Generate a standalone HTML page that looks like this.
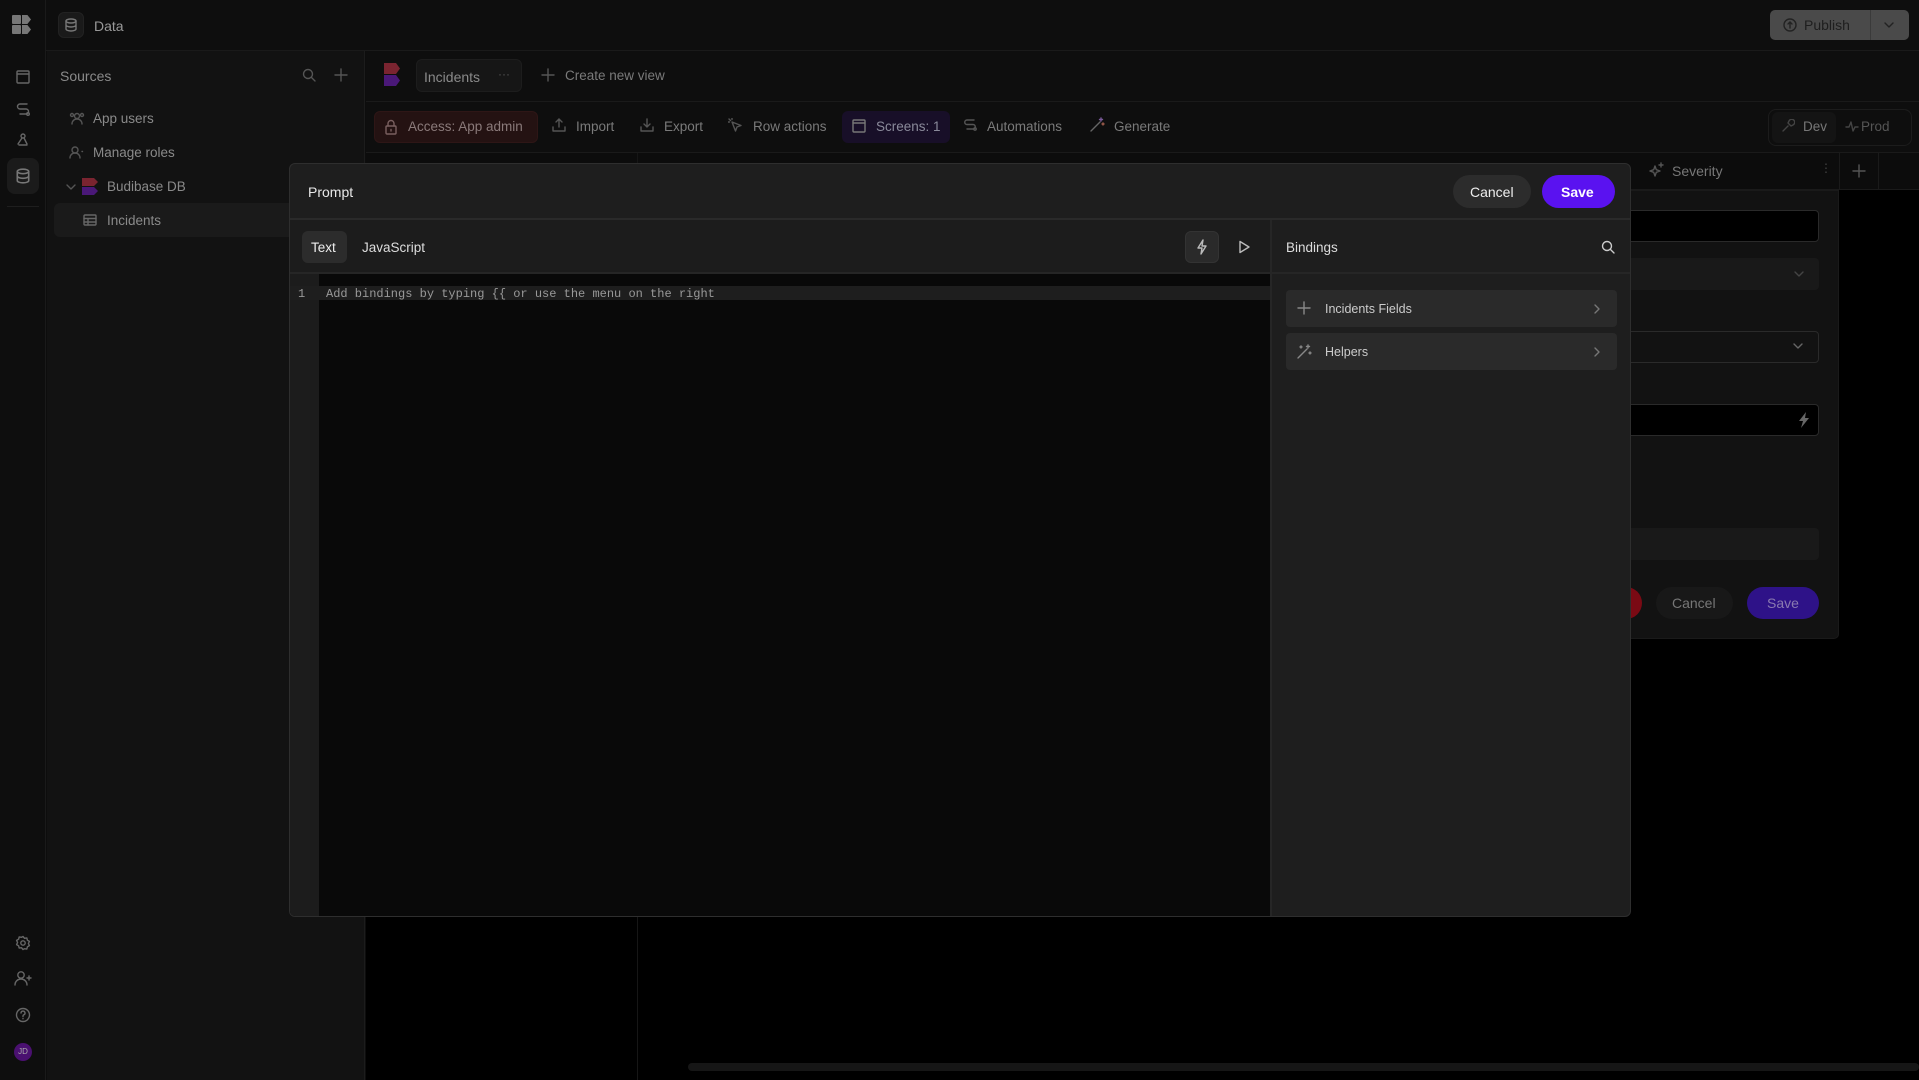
<!DOCTYPE html>
<html><head><meta charset="utf-8"><style>
*{box-sizing:border-box;margin:0;padding:0}
body{width:1919px;height:1080px;background:#0d0d0d;font-family:"Liberation Sans",sans-serif;color:#8a8a8a;position:relative;overflow:hidden;font-size:14px}
.a{position:absolute}
.t{position:absolute;white-space:nowrap;line-height:1}
svg{position:absolute;fill:none;stroke:currentColor;stroke-width:1.4;stroke-linecap:round;stroke-linejoin:round}
</style></head><body>
<!-- rail -->
<div class="a" style="left:0;top:0;width:46px;height:1080px;background:#0e0e0e;border-right:1px solid #1a1a1a"></div>
<div class="a" style="left:46px;top:0;width:1873px;height:51px;background:#0e0e0e;border-bottom:1px solid #1a1a1a"></div>
<div class="a" style="left:12px;top:15px;width:9px;height:9px;background:#777;border-radius:1px"></div>
<div class="a" style="left:22px;top:15px;width:9px;height:9px;background:#777;clip-path:polygon(0 0,60% 0,100% 50%,60% 100%,0 100%)"></div>
<div class="a" style="left:12px;top:25px;width:9px;height:9px;background:#777;border-radius:1px"></div>
<div class="a" style="left:22px;top:25px;width:9px;height:9px;background:#777;clip-path:polygon(0 0,60% 0,100% 50%,60% 100%,0 100%)"></div>
<div class="a" style="left:58px;top:12px;width:26px;height:26px;background:#1a1a1a;border:1px solid #222;border-radius:6px"></div>
<svg style="left:64px;top:18px;color:#777" width="14" height="14" viewBox="0 0 14 14"><ellipse cx="7" cy="3" rx="5" ry="2"/><path d="M2 3v8c0 1.1 2.2 2 5 2s5-.9 5-2V3M2 7c0 1.1 2.2 2 5 2s5-.9 5-2"/></svg>
<div class="t" style="left:94px;top:19px;font-size:14px;color:#999">Data</div>
<svg style="left:15px;top:69px;color:#666" width="16" height="16" viewBox="0 0 16 16"><rect x="2" y="2" width="12" height="12" rx="1"/><path d="M2 5h12"/></svg>
<svg style="left:15px;top:101px;color:#666" width="16" height="16" viewBox="0 0 16 16"><path d="M12 3H5a2 2 0 0 0 0 5h6a2 2 0 0 1 0 5H5"/><circle cx="13" cy="13" r="1.3"/></svg>
<svg style="left:15px;top:133px;color:#666" width="16" height="16" viewBox="0 0 16 16"><circle cx="8" cy="3" r="2"/><path d="M7 5l-4 6M9 5l3 6M4 12h8"/></svg>
<div class="a" style="left:7px;top:158px;width:32px;height:36px;background:#1b1b1b;border-radius:8px"></div>
<svg style="left:15px;top:168px;color:#777" width="16" height="16" viewBox="0 0 14 14"><ellipse cx="7" cy="3" rx="5" ry="2"/><path d="M2 3v8c0 1.1 2.2 2 5 2s5-.9 5-2V3M2 7c0 1.1 2.2 2 5 2s5-.9 5-2"/></svg>
<div class="a" style="left:7px;top:206px;width:32px;height:1px;background:#1e1e1e"></div>
<svg style="left:15px;top:935px;color:#666" width="16" height="16" viewBox="0 0 16 16"><circle cx="8" cy="8" r="2.2"/><path d="M8 1.5l1.5 1.8 2.3-.4.6 2.3 2 1.2-1 2.1 1 2.1-2 1.2-.6 2.3-2.3-.4L8 14.5l-1.5-1.8-2.3.4-.6-2.3-2-1.2 1-2.1-1-2.1 2-1.2.6-2.3 2.3.4z"/></svg>
<svg style="left:14px;top:970px;color:#666" width="18" height="16" viewBox="0 0 18 16"><circle cx="7" cy="5" r="3.2"/><path d="M1 15c0-3.5 2.7-6 6-6s6 2.5 6 6M15 6v4M13 8h4"/></svg>
<svg style="left:15px;top:1007px;color:#666" width="16" height="16" viewBox="0 0 16 16"><circle cx="8" cy="8" r="6.5"/><path d="M6 6a2 2 0 1 1 2.7 1.9c-.5.2-.7.6-.7 1.1v.5M8 11.5v.2"/></svg>
<div class="a" style="left:14px;top:1043px;width:18px;height:18px;border-radius:50%;background:#4a1070;color:#aaa;font-size:8px;text-align:center;line-height:18px">JD</div>
<!-- sidebar -->
<div class="a" style="left:47px;top:51px;width:318px;height:1029px;background:#121212;border-right:1px solid #1c1c1c"></div>
<div class="t" style="left:60px;top:69px;font-size:14px;color:#8a8a8a">Sources</div>
<svg style="left:302px;top:68px;color:#555" width="14" height="14" viewBox="0 0 14 14"><circle cx="6" cy="6" r="4.5"/><path d="M9.5 9.5L13 13"/></svg>
<svg style="left:333px;top:67px;color:#555" width="16" height="16" viewBox="0 0 16 16"><path d="M8 2v12M2 8h12"/></svg>
<svg style="left:69px;top:111px;color:#555" width="16" height="14" viewBox="0 0 16 14"><circle cx="8" cy="5" r="2.5"/><path d="M3 13c0-3 2.2-5 5-5s5 2 5 5"/><circle cx="3" cy="4" r="1.5"/><circle cx="13" cy="4" r="1.5"/></svg>
<div class="t" style="left:93px;top:112px;font-size:13.5px;color:#8a8a8a">App users</div>
<svg style="left:69px;top:145px;color:#555" width="16" height="14" viewBox="0 0 16 14"><circle cx="6" cy="5" r="3"/><path d="M1 13c0-3 2.2-5 5-5s5 2 5 5M13 6.5h.5"/></svg>
<div class="t" style="left:93px;top:146px;font-size:13.5px;color:#8a8a8a">Manage roles</div>
<svg style="left:66px;top:182px;color:#555" width="10" height="10" viewBox="0 0 10 10"><path d="M1 3l4 4 4-4"/></svg>
<div class="a" style="left:82px;top:178px;width:8px;height:8px;background:#7a2430"></div>
<div class="a" style="left:90px;top:178px;width:8px;height:8px;background:#7a2430;clip-path:polygon(0 0,50% 0,100% 50%,50% 100%,0 100%)"></div>
<div class="a" style="left:82px;top:187px;width:8px;height:8px;background:#4a1878"></div>
<div class="a" style="left:90px;top:187px;width:8px;height:8px;background:#4a1878;clip-path:polygon(0 0,50% 0,100% 50%,50% 100%,0 100%)"></div>
<div class="t" style="left:107px;top:180px;font-size:13.5px;color:#8a8a8a">Budibase DB</div>
<div class="a" style="left:54px;top:203px;width:300px;height:34px;background:#1a1a1a;border-radius:6px"></div>
<svg style="left:83px;top:213px;color:#666" width="14" height="14" viewBox="0 0 14 14"><rect x="1" y="2" width="12" height="10" rx="1"/><path d="M1 5.5h12M1 9h12M5 5.5V12"/></svg>
<div class="t" style="left:107px;top:214px;font-size:13.5px;color:#8a8a8a">Incidents</div>
<!-- main header -->
<div class="a" style="left:366px;top:51px;width:1553px;height:51px;border-bottom:1px solid #1a1a1a;background:#0e0e0e"></div>
<div class="a" style="left:384px;top:63px;width:8px;height:11px;background:#7a2430"></div>
<div class="a" style="left:392px;top:63px;width:8px;height:11px;background:#7a2430;clip-path:polygon(0 0,50% 0,100% 50%,50% 100%,0 100%)"></div>
<div class="a" style="left:384px;top:75px;width:8px;height:11px;background:#4a1878"></div>
<div class="a" style="left:392px;top:75px;width:8px;height:11px;background:#4a1878;clip-path:polygon(0 0,50% 0,100% 50%,50% 100%,0 100%)"></div>
<div class="a" style="left:416px;top:59px;width:106px;height:33px;background:#161616;border:1px solid #1d1d1d;border-radius:6px"></div>
<div class="t" style="left:424px;top:70px;font-size:14px;color:#8a8a8a">Incidents</div>
<div class="t" style="left:498px;top:68px;font-size:12px;color:#555">···</div>
<svg style="left:541px;top:68px;color:#555" width="14" height="14" viewBox="0 0 14 14"><path d="M7 1v12M1 7h12"/></svg>
<div class="t" style="left:565px;top:69px;font-size:13.5px;color:#7a7a7a">Create new view</div>
<!-- toolbar -->
<div class="a" style="left:366px;top:102px;width:1553px;height:51px;border-bottom:1px solid #1a1a1a;background:#0e0e0e"></div>
<div class="a" style="left:374px;top:111px;width:164px;height:32px;background:#241212;border:1px solid #2e1616;border-radius:6px"></div>
<svg style="left:384px;top:119px;color:#7a6060" width="14" height="16" viewBox="0 0 14 16"><rect x="2" y="7" width="10" height="8" rx="1"/><path d="M4 7V4.5a3 3 0 0 1 6 0V7M7 10.5v1.5"/></svg>
<div class="t" style="left:408px;top:120px;font-size:13.5px;color:#8a7a7a">Access: App admin</div>
<svg style="left:552px;top:118px;color:#555" width="14" height="14" viewBox="0 0 14 14"><path d="M7 9V1M4 4l3-3 3 3M1 9v4h12V9"/></svg>
<div class="t" style="left:576px;top:120px;font-size:13.5px;color:#7a7a7a">Import</div>
<svg style="left:640px;top:118px;color:#555" width="14" height="14" viewBox="0 0 14 14"><path d="M7 1v8M4 6l3 3 3-3M1 9v4h12V9"/></svg>
<div class="t" style="left:664px;top:120px;font-size:13.5px;color:#7a7a7a">Export</div>
<svg style="left:728px;top:118px;color:#555" width="14" height="14" viewBox="0 0 14 14"><path d="M4 4l9 3.5-4 1.5-1.5 4z"/><path d="M1 1l1.5 1.5M4 0v1.5M0 4h1.5"/></svg>
<div class="t" style="left:753px;top:120px;font-size:13.5px;color:#7a7a7a">Row actions</div>
<div class="a" style="left:842px;top:111px;width:108px;height:32px;background:#180f28;border-radius:6px"></div>
<svg style="left:852px;top:119px;color:#777" width="14" height="14" viewBox="0 0 14 14"><rect x="1" y="1" width="12" height="12" rx="1"/><path d="M1 4h12"/></svg>
<div class="t" style="left:876px;top:120px;font-size:13.5px;color:#8a8a9a">Screens: 1</div>
<svg style="left:963px;top:118px;color:#555" width="14" height="14" viewBox="0 0 14 14"><path d="M11 2H4a2 2 0 0 0 0 4.5h6a2 2 0 0 1 0 4.5H4"/><circle cx="12" cy="11" r="1.2"/></svg>
<div class="t" style="left:987px;top:120px;font-size:13.5px;color:#7a7a7a">Automations</div>
<svg style="left:1089px;top:117px;color:#666" width="16" height="16" viewBox="0 0 16 16"><path d="M2 14l9-9"/><path d="M12 1v3M10.5 2.5h3" stroke="#7a5a9a"/><path d="M14 6v2M13 7h2" stroke="#9a5a4a"/></svg>
<div class="t" style="left:1114px;top:120px;font-size:13.5px;color:#7a7a7a">Generate</div>
<div class="a" style="left:1768px;top:109px;width:144px;height:37px;border:1px solid #1c1c1c;border-radius:8px"></div>
<div class="a" style="left:1772px;top:112px;width:64px;height:31px;background:#141414;border-radius:6px"></div>
<div class="t" style="left:1803px;top:120px;font-size:13.5px;color:#777">Dev</div>
<svg style="left:1781px;top:119px;color:#444" width="14" height="14" viewBox="0 0 14 14"><path d="M2 12l5-5M8 2a3 3 0 1 1 4 4l-2 1-3-3z"/></svg>
<div class="t" style="left:1861px;top:120px;font-size:13.5px;color:#555">Prod</div>
<svg style="left:1845px;top:119px;color:#444" width="14" height="14" viewBox="0 0 14 14"><path d="M1 8h3l2-5 2 9 2-4h3"/></svg>
<!-- Publish -->
<div class="a" style="left:1770px;top:10px;width:139px;height:30px;background:#4a4a4a;border-radius:5px"></div>
<div class="a" style="left:1870px;top:10px;width:1px;height:30px;background:#3a3a3a"></div>
<svg style="left:1783px;top:18px;color:#222" width="14" height="14" viewBox="0 0 14 14"><circle cx="7" cy="7" r="6"/><path d="M7 10V4M5 6l2-2 2 2"/></svg>
<div class="t" style="left:1804px;top:18px;font-size:14px;color:#1e1e1e">Publish</div>
<svg style="left:1883px;top:19px;color:#222" width="12" height="12" viewBox="0 0 12 12"><path d="M2 4l4 4 4-4"/></svg>
<!-- grid area -->
<div class="a" style="left:366px;top:153px;width:1553px;height:927px;background:#000"></div>
<div class="a" style="left:366px;top:153px;width:1553px;height:37px;background:#0c0c0c;border-bottom:1px solid #1a1a1a"></div>
<div class="a" style="left:637px;top:153px;width:1px;height:927px;background:#161616"></div>
<div class="a" style="left:1839px;top:153px;width:1px;height:37px;background:#1a1a1a"></div>
<div class="a" style="left:1878px;top:153px;width:1px;height:37px;background:#1a1a1a"></div>
<svg style="left:1649px;top:162px;color:#555" width="16" height="16" viewBox="0 0 16 16"><path d="M6 4l1.3 3.7L11 9l-3.7 1.3L6 14l-1.3-3.7L1 9l3.7-1.3zM12 1v4M10 3h4"/></svg>
<div class="t" style="left:1672px;top:164px;font-size:14px;color:#777">Severity</div>
<div class="t" style="left:1820px;top:162px;font-size:12px;color:#444">⋮</div>
<svg style="left:1852px;top:164px;color:#555" width="14" height="14" viewBox="0 0 14 14"><path d="M7 1v12M1 7h12"/></svg>
<div class="a" style="left:1600px;top:190px;width:239px;height:449px;background:#121212;border:1px solid #1a1a1a;border-radius:0 0 5px 5px"></div>
<div class="a" style="left:1620px;top:210px;width:199px;height:32px;background:#000;border:1px solid #2a2a2a;border-radius:4px"></div>
<div class="a" style="left:1620px;top:258px;width:199px;height:32px;background:#191919;border-radius:4px"></div>
<svg style="left:1793px;top:269px;color:#444" width="12" height="10" viewBox="0 0 12 10"><path d="M2 3l4 4 4-4"/></svg>
<div class="a" style="left:1620px;top:331px;width:199px;height:32px;border:1px solid #2a2a2a;border-radius:4px"></div>
<svg style="left:1792px;top:341px;color:#666" width="12" height="10" viewBox="0 0 12 10"><path d="M2 3l4 4 4-4"/></svg>
<div class="a" style="left:1620px;top:404px;width:199px;height:32px;background:#000;border:1px solid #2a2a2a;border-radius:4px"></div>
<svg style="left:1797px;top:411px;fill:#666;stroke:none" width="14" height="18" viewBox="0 0 14 18"><path d="M9 1L2 10h4l-2 7 8-10H8z"/></svg>
<div class="a" style="left:1620px;top:528px;width:199px;height:32px;background:#191919;border-radius:4px"></div>
<div class="a" style="left:1610px;top:587px;width:32px;height:32px;background:#7a0a14;border-radius:16px"></div>
<div class="a" style="left:1656px;top:587px;width:77px;height:32px;background:#181818;border-radius:16px"></div>
<div class="t" style="left:1672px;top:596px;font-size:14px;color:#777">Cancel</div>
<div class="a" style="left:1747px;top:587px;width:72px;height:32px;background:#2e1288;border-radius:16px"></div>
<div class="t" style="left:1767px;top:596px;font-size:14px;color:#8a7ab0">Save</div>
<div class="a" style="left:688px;top:1063px;width:1231px;height:8px;background:#161616;border-radius:4px"></div>
<!-- modal -->
<div class="a" style="left:289px;top:163px;width:1342px;height:754px;background:#1e1e1e;border:1px solid #2e2e2e;border-radius:6px;overflow:hidden">
 <div class="a" style="left:0;top:54px;width:1342px;height:2px;background:#2a2a2a"></div>
 <div class="t" style="left:18px;top:21px;font-size:14px;color:#e8e8e8">Prompt</div>
 <div class="a" style="left:1163px;top:11px;width:78px;height:33px;background:#2c2c2c;border-radius:17px"></div>
 <div class="t" style="left:1180px;top:21px;font-size:14px;color:#eee">Cancel</div>
 <div class="a" style="left:1252px;top:11px;width:73px;height:33px;background:#5a12f0;border-radius:17px"></div>
 <div class="t" style="left:1271px;top:21px;font-size:14px;color:#fff;font-weight:bold">Save</div>
 <div class="a" style="left:0;top:56px;width:982px;height:52px;background:#1c1c1c"></div>
 <div class="a" style="left:0;top:108px;width:1342px;height:2px;background:#262626"></div>
 <div class="a" style="left:980px;top:56px;width:2px;height:700px;background:#262626"></div>
 <div class="a" style="left:12px;top:67px;width:45px;height:32px;background:#2c2c2c;border-radius:6px"></div>
 <div class="t" style="left:21px;top:77px;font-size:13.5px;color:#eee">Text</div>
 <div class="t" style="left:72px;top:77px;font-size:13.5px;color:#ddd">JavaScript</div>
 <div class="a" style="left:895px;top:67px;width:34px;height:32px;background:#2a2a2a;border:1px solid #333;border-radius:6px"></div>
 <svg style="left:905px;top:75px;color:#bbb" width="14" height="16" viewBox="0 0 14 16"><path d="M8 1L3 9h4l-1 6 5-8H7z"/></svg>
 <svg style="left:947px;top:76px;color:#bbb" width="14" height="14" viewBox="0 0 14 14"><path d="M3 1.5l9 5.5-9 5.5z"/></svg>
 <div class="t" style="left:996px;top:77px;font-size:13.5px;color:#ddd">Bindings</div>
 <svg style="left:1311px;top:76px;color:#ccc" width="14" height="14" viewBox="0 0 14 14"><circle cx="6" cy="6" r="4.5"/><path d="M9.5 9.5L13 13"/></svg>
 <div class="a" style="left:0;top:110px;width:980px;height:646px;background:#090909"></div>
 <div class="a" style="left:0;top:110px;width:29px;height:646px;background:#1c1c1c"></div>
 <div class="a" style="left:0;top:122px;width:980px;height:14px;background:#1e1e1e"></div>
 <div class="t" style="left:8px;top:124px;font-family:'Liberation Mono',monospace;font-size:12px;color:#999">1</div>
 <div class="t" style="left:36px;top:124px;font-family:'Liberation Mono',monospace;font-size:12px;color:#999">Add bindings by typing {{ or use the menu on the right</div>
 <div class="a" style="left:996px;top:126px;width:331px;height:37px;background:#2a2a2a;border-radius:4px"></div>
 <svg style="left:1007px;top:137px;color:#888" width="14" height="14" viewBox="0 0 14 14"><path d="M7 1v12M1 7h12"/></svg>
 <div class="t" style="left:1035px;top:139px;font-size:12.5px;color:#ccc">Incidents Fields</div>
 <svg style="left:1302px;top:139px;color:#777" width="10" height="12" viewBox="0 0 10 12"><path d="M3 2l4 4-4 4"/></svg>
 <div class="a" style="left:996px;top:169px;width:331px;height:37px;background:#2a2a2a;border-radius:4px"></div>
 <svg style="left:1006px;top:180px;color:#888" width="16" height="16" viewBox="0 0 16 16"><path d="M2 14l9-9M12 1v3M10.5 2.5h3M5 2v2M4 3h2M14 8v2M13 9h2"/></svg>
 <div class="t" style="left:1035px;top:182px;font-size:12.5px;color:#ccc">Helpers</div>
 <svg style="left:1302px;top:182px;color:#777" width="10" height="12" viewBox="0 0 10 12"><path d="M3 2l4 4-4 4"/></svg>
</div>
</body></html>
